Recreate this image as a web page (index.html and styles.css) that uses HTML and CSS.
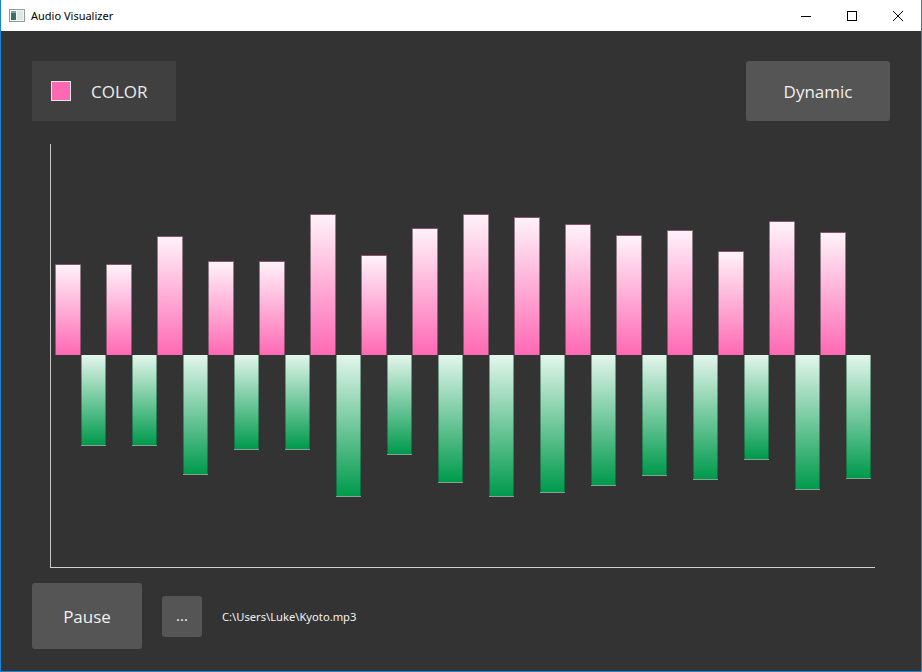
FILE: index.html
```html
<!DOCTYPE html>
<html>
<head>
<meta charset="utf-8">
<title>Audio Visualizer</title>
<link rel="stylesheet" href="styles.css">
</head>
<body>
<div class="window">
  <div class="titlebar">
    <svg class="app-icon" width="16" height="13" viewBox="0 0 16 13">
      <rect x="0.5" y="0.5" width="15" height="12" fill="#f4f4f4" stroke="#9a9a9a"/>
      <rect x="2" y="2" width="5" height="9" fill="#3d6e6e"/>
      <rect x="8" y="2" width="6" height="9" fill="#dfe6e6"/>
      <rect x="2" y="2" width="5" height="2" fill="#7aa5a5"/>
    </svg>
    <span class="title">Audio Visualizer</span>
    <div class="controls">
      <div class="ctl"><svg width="10" height="10" viewBox="0 0 10 10"><path d="M0 5.5H10" stroke="#000" stroke-width="1"/></svg></div>
      <div class="ctl"><svg width="10" height="10" viewBox="0 0 10 10"><rect x="0.5" y="0.5" width="9" height="9" fill="none" stroke="#000"/></svg></div>
      <div class="ctl"><svg width="10" height="10" viewBox="0 0 10 10"><path d="M0 0L10 10M10 0L0 10" stroke="#000" stroke-width="1"/></svg></div>
    </div>
  </div>
  <div class="content">
    <div class="toprow">
      <div class="color-btn"><span class="swatch"></span><span class="color-label">COLOR</span></div>
      <div class="btn dynamic">Dynamic</div>
    </div>
    <div class="chart">
      <div class="bars">
        <div class="slot"><div class="up"><div class="bar pink" style="height:91px"></div></div><div class="down"></div></div>
        <div class="slot"><div class="up"></div><div class="down"><div class="bar green" style="height:91px"></div></div></div>
        <div class="slot"><div class="up"><div class="bar pink" style="height:91px"></div></div><div class="down"></div></div>
        <div class="slot"><div class="up"></div><div class="down"><div class="bar green" style="height:91px"></div></div></div>
        <div class="slot"><div class="up"><div class="bar pink" style="height:119px"></div></div><div class="down"></div></div>
        <div class="slot"><div class="up"></div><div class="down"><div class="bar green" style="height:120px"></div></div></div>
        <div class="slot"><div class="up"><div class="bar pink" style="height:94px"></div></div><div class="down"></div></div>
        <div class="slot"><div class="up"></div><div class="down"><div class="bar green" style="height:95px"></div></div></div>
        <div class="slot"><div class="up"><div class="bar pink" style="height:94px"></div></div><div class="down"></div></div>
        <div class="slot"><div class="up"></div><div class="down"><div class="bar green" style="height:95px"></div></div></div>
        <div class="slot"><div class="up"><div class="bar pink" style="height:141px"></div></div><div class="down"></div></div>
        <div class="slot"><div class="up"></div><div class="down"><div class="bar green" style="height:142px"></div></div></div>
        <div class="slot"><div class="up"><div class="bar pink" style="height:100px"></div></div><div class="down"></div></div>
        <div class="slot"><div class="up"></div><div class="down"><div class="bar green" style="height:100px"></div></div></div>
        <div class="slot"><div class="up"><div class="bar pink" style="height:127px"></div></div><div class="down"></div></div>
        <div class="slot"><div class="up"></div><div class="down"><div class="bar green" style="height:128px"></div></div></div>
        <div class="slot"><div class="up"><div class="bar pink" style="height:141px"></div></div><div class="down"></div></div>
        <div class="slot"><div class="up"></div><div class="down"><div class="bar green" style="height:142px"></div></div></div>
        <div class="slot"><div class="up"><div class="bar pink" style="height:138px"></div></div><div class="down"></div></div>
        <div class="slot"><div class="up"></div><div class="down"><div class="bar green" style="height:138px"></div></div></div>
        <div class="slot"><div class="up"><div class="bar pink" style="height:131px"></div></div><div class="down"></div></div>
        <div class="slot"><div class="up"></div><div class="down"><div class="bar green" style="height:131px"></div></div></div>
        <div class="slot"><div class="up"><div class="bar pink" style="height:120px"></div></div><div class="down"></div></div>
        <div class="slot"><div class="up"></div><div class="down"><div class="bar green" style="height:121px"></div></div></div>
        <div class="slot"><div class="up"><div class="bar pink" style="height:125px"></div></div><div class="down"></div></div>
        <div class="slot"><div class="up"></div><div class="down"><div class="bar green" style="height:125px"></div></div></div>
        <div class="slot"><div class="up"><div class="bar pink" style="height:104px"></div></div><div class="down"></div></div>
        <div class="slot"><div class="up"></div><div class="down"><div class="bar green" style="height:105px"></div></div></div>
        <div class="slot"><div class="up"><div class="bar pink" style="height:134px"></div></div><div class="down"></div></div>
        <div class="slot"><div class="up"></div><div class="down"><div class="bar green" style="height:135px"></div></div></div>
        <div class="slot"><div class="up"><div class="bar pink" style="height:123px"></div></div><div class="down"></div></div>
        <div class="slot"><div class="up"></div><div class="down"><div class="bar green" style="height:124px"></div></div></div>
      </div>
    </div>
    <div class="bottomrow">
      <div class="btn pause">Pause</div>
      <div class="btn dots">...</div>
      <span class="path">C:\Users\Luke\Kyoto.mp3</span>
    </div>
  </div>
</div>
</body>
</html>
```

FILE: styles.css
```css
html, body {
  margin: 0;
  padding: 0;
  background: #ffffff;
}

body {
  width: 922px;
  height: 672px;
  overflow: hidden;
  font-family: "Open Sans", "Noto Sans", "Liberation Sans", sans-serif;
}

.window {
  box-sizing: border-box;
  width: 922px;
  height: 672px;
  border: 1px solid #1883d7;
  border-top: none;
  display: flex;
  flex-direction: column;
}

.titlebar {
  height: 31px;
  flex: none;
  background: #ffffff;
  display: flex;
  align-items: center;
}

.app-icon {
  margin-left: 8px;
}

.title {
  margin-left: 6px;
  font-size: 11px;
  color: #000;
  font-family: "Noto Sans", "Open Sans", sans-serif;
}

.controls {
  margin-left: auto;
  display: flex;
  height: 31px;
}

.ctl {
  width: 46px;
  height: 31px;
  display: flex;
  align-items: center;
  justify-content: center;
}

.content {
  flex: 1;
  background: #333333;
  padding: 30px 31px 0 31px;
  display: flex;
  flex-direction: column;
}

.toprow {
  display: flex;
  justify-content: space-between;
  height: 60px;
}

.color-btn {
  width: 144px;
  height: 60px;
  background: #404040;
  display: flex;
  align-items: center;
  box-sizing: border-box;
  padding-left: 19px;
}

.swatch {
  box-sizing: border-box;
  width: 20px;
  height: 20px;
  background: #ff69b4;
  border: 1px solid #e6e6e6;
}

.color-label {
  margin-left: 20px;
  font-size: 17px;
  color: #ececec;
}

.btn {
  background: #555555;
  border-radius: 3px;
  color: #f0f0f0;
  display: flex;
  align-items: center;
  justify-content: center;
}

.dynamic {
  width: 144px;
  height: 60px;
  font-size: 17px;
}

.chart {
  margin: 23px 15px 0 18px;
  height: 424px;
  box-sizing: border-box;
  border-left: 1px solid #c8c8c8;
  border-bottom: 1px solid #d0d0d0;
}

.bars {
  display: flex;
  padding-left: 4px;
  height: 423px;
}

.slot {
  width: 25.5px;
  flex: none;
  display: flex;
  flex-direction: column;
}

.up {
  height: 211px;
  display: flex;
  flex-direction: column;
  justify-content: flex-end;
}

.down {
  height: 212px;
  display: flex;
  flex-direction: column;
  justify-content: flex-start;
}

.bar {
  box-sizing: border-box;
  width: 100%;
}

.pink {
  background: linear-gradient(to bottom, #fff2f9, #ff69b4);
  border: 1px solid rgba(70, 60, 66, 0.6);
  border-bottom: none;
}

.green {
  background: linear-gradient(to bottom, #e3f6ec, #009a4c);
  border: 1px solid rgba(20, 60, 40, 0.45);
  border-top: none;
}

.bottomrow {
  margin-top: 15px;
  display: flex;
  align-items: center;
  height: 66px;
}

.pause {
  width: 110px;
  height: 66px;
  font-size: 17px;
}

.dots {
  margin-left: 20px;
  width: 40px;
  height: 41px;
  font-size: 15px;
  padding-bottom: 2px;
  box-sizing: border-box;
}

.path {
  margin-left: 20px;
  font-size: 11.2px;
  color: #f2f2f2;
  font-family: "Noto Sans", "Open Sans", sans-serif;
}
```
